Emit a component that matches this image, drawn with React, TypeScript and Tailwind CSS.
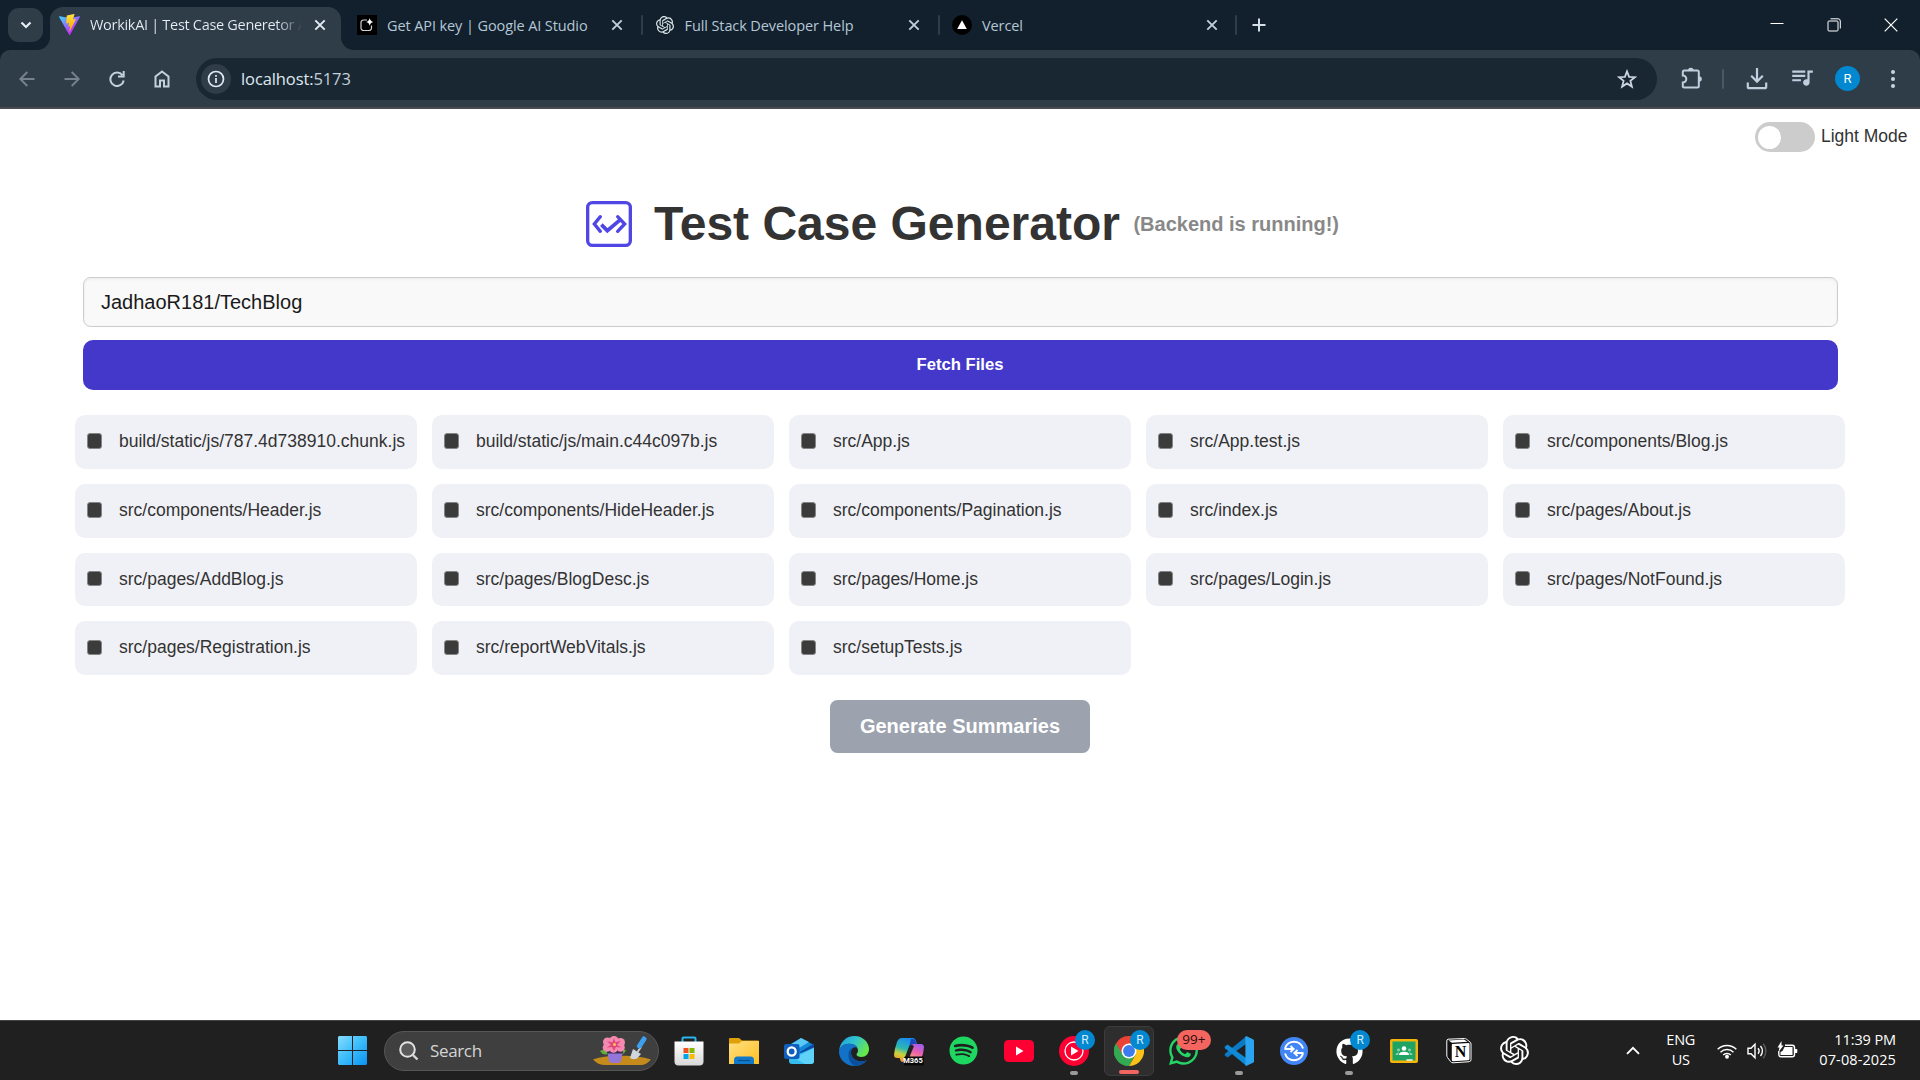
import React from "react";
import { FaSpotify, FaGithub, FaWhatsapp } from "react-icons/fa";
import { SiOpenai } from "react-icons/si";
import { MdQueueMusic } from "react-icons/md";

const files = [
  "build/static/js/787.4d738910.chunk.js",
  "build/static/js/main.c44c097b.js",
  "src/App.js",
  "src/App.test.js",
  "src/components/Blog.js",
  "src/components/Header.js",
  "src/components/HideHeader.js",
  "src/components/Pagination.js",
  "src/index.js",
  "src/pages/About.js",
  "src/pages/AddBlog.js",
  "src/pages/BlogDesc.js",
  "src/pages/Home.js",
  "src/pages/Login.js",
  "src/pages/NotFound.js",
  "src/pages/Registration.js",
  "src/reportWebVitals.js",
  "src/setupTests.js",
];

function Cross({ bright = false }: { bright?: boolean }) {
  return (
    <svg width="12" height="12" viewBox="0 0 12 12" className={bright ? "text-[#e6edf3]" : "text-[#c0cfdc]"}>
      <path d="M1.3 1.3l9.4 9.4M10.7 1.3l-9.4 9.4" stroke="currentColor" strokeWidth="1.9" fill="none" />
    </svg>
  );
}

function ViteIcon() {
  return (
    <svg width="21" height="21" viewBox="0 0 256 257">
      <defs>
        <linearGradient id="viteA" x1="0%" x2="60%" y1="8%" y2="78%">
          <stop offset="0%" stopColor="#41D1FF" />
          <stop offset="100%" stopColor="#BD34FE" />
        </linearGradient>
        <linearGradient id="viteB" x1="43%" x2="50%" y1="2%" y2="89%">
          <stop offset="0%" stopColor="#FFEA83" />
          <stop offset="8%" stopColor="#FFDD35" />
          <stop offset="100%" stopColor="#FFA800" />
        </linearGradient>
      </defs>
      <path fill="url(#viteA)" d="M255.153 37.938L134.897 252.976c-2.483 4.44-8.862 4.466-11.382.048L.875 37.958c-2.746-4.814 1.371-10.646 6.827-9.67l120.385 21.517a6.537 6.537 0 0 0 2.322-.004l117.867-21.483c5.438-.991 9.574 4.796 6.877 9.62Z" />
      <path fill="url(#viteB)" d="M185.432.063L96.44 17.501a3.268 3.268 0 0 0-2.634 3.014l-5.474 92.456a3.268 3.268 0 0 0 3.997 3.378l24.777-5.718c2.318-.535 4.413 1.507 3.936 3.838l-7.361 36.047c-.495 2.426 1.782 4.5 4.151 3.78l15.304-4.649c2.372-.72 4.652 1.36 4.15 3.788l-11.698 56.621c-.732 3.542 3.979 5.473 5.943 2.437l1.313-2.028l72.516-144.72c1.215-2.423-.88-5.186-3.54-4.672l-25.505 4.922c-2.396.462-4.435-1.77-3.759-4.114l16.646-57.705c.677-2.35-1.37-4.583-3.769-4.113Z" />
    </svg>
  );
}

function StudioIcon() {
  return (
    <svg width="20" height="20" viewBox="0 0 20 20">
      <rect width="20" height="20" fill="#000" />
      <path d="M10 5H6.5A2.5 2.5 0 0 0 4 7.500V13a2.500 2.500 0 0 0 2.500 2.500H12A2.500 2.500 0 0 0 14.500 13v-2.500" fill="none" stroke="#cfcfcf" strokeWidth="1.2" />
      <path d="M12.700 3q.5 3.300 3.600 3.900q-3.100.6-3.600 3.900q-.5-3.300-3.600-3.900q3.100-.6 3.600-3.900z" fill="#fff" />
    </svg>
  );
}

function VercelIcon() {
  return (
    <svg width="20" height="20" viewBox="0 0 20 20">
      <circle cx="10" cy="10" r="10" fill="#000" />
      <path d="M10 5.300l4.800 8.700H5.200z" fill="#fff" />
    </svg>
  );
}

function Tab({ icon, title, last = false }: { icon: React.ReactNode; title: string; last?: boolean }) {
  return (
    <div className="flex h-[34px] w-[297.5px] items-center">
      <div className="flex w-[22px] shrink-0 justify-center">{icon}</div>
      <span className="ml-[9px] flex-1 whitespace-nowrap pt-[1.5px] text-[14.5px] tracking-[-0.1px] text-[#b5c6d6]">{title}</span>
      <div className={last ? "mr-[17px]" : "mr-[18px]"}>
        <Cross />
      </div>
      <div className={last ? "mr-[12px] h-5 w-[2px] shrink-0 rounded bg-[#2f3d49]" : "mr-[11px] h-5 w-[2px] shrink-0 rounded bg-[#2f3d49]"} />
    </div>
  );
}

function TabStrip() {
  return (
    <div className="flex h-[50px] bg-[#11202c]">
      <div className="ml-2 mt-2 flex h-[34px] w-[35px] items-center justify-center rounded-[11px] bg-[#2f3d49]">
        <svg width="12" height="8" viewBox="0 0 12 8">
          <path d="M1.500 1.500L6 6l4.500-4.500" stroke="#e6edf3" strokeWidth="2.200" fill="none" />
        </svg>
      </div>
      <svg width="14" height="50" viewBox="0 0 14 50" className="ml-[-7px]">
        <path d="M14 37v13H1A13 13 0 0 0 14 37z" fill="#2f3d49" />
      </svg>
      <div className="mt-[7px] flex h-[43px] w-[291px] items-center rounded-t-[13px] bg-[#2f3d49] pb-2 pl-[9px]">
        <ViteIcon />
        <span className="ml-[10px] w-[212px] overflow-hidden whitespace-nowrap bg-gradient-to-r from-[#e8eef4] from-88% to-transparent bg-clip-text pt-[1.5px] text-[14.5px] tracking-[-0.3px] text-transparent">
          WorkikAI | Test Case Generetor App
        </span>
        <div className="ml-[12px]">
          <Cross bright />
        </div>
      </div>
      <svg width="14" height="50" viewBox="0 0 14 50">
        <path d="M0 37v13h13A13 13 0 0 1 0 37z" fill="#2f3d49" />
      </svg>
      <div className="ml-px mt-2 flex">
        <Tab icon={<StudioIcon />} title="Get API key | Google AI Studio" />
        <Tab icon={<SiOpenai size={18} color="#dfe6ec" />} title="Full Stack Developer Help" />
        <Tab icon={<VercelIcon />} title="Vercel" last />
        <svg width="14" height="34" viewBox="0 0 14 34" className="ml-[3px]">
          <path d="M7 10.500v13M.5 17h13" stroke="#d5dfe8" strokeWidth="2" />
        </svg>
      </div>
      <div className="ml-auto mr-[22px] mt-[18px] flex h-[14px] items-center gap-[43px]">
        <svg width="14" height="14" viewBox="0 0 14 14">
          <path d="M.5 5.500h13" stroke="#fff" strokeWidth="1" />
        </svg>
        <svg width="14" height="14" viewBox="0 0 14 14">
          <rect x="1" y="3" width="10" height="10" rx="1" fill="none" stroke="#fff" />
          <path d="M3.500.8H11A2.200 2.200 0 0 1 13.300 3v7.500" fill="none" stroke="#fff" />
        </svg>
        <svg width="14" height="14" viewBox="0 0 14 14">
          <path d="M.7.7l12.600 12.600M13.300.7L.7 13.300" stroke="#fff" strokeWidth="1.200" />
        </svg>
      </div>
    </div>
  );
}

function Toolbar() {
  return (
    <div className="bg-[#11202c]">
      <div className="flex h-[59px] items-center rounded-t-[10px] border-b-2 border-[#4a4a50] bg-[#2f3d49] pl-[19px] pt-px">
        <div className="flex w-[177px] gap-[29px]">
          <svg width="16" height="16" viewBox="0 0 16 16" fill="none" stroke="#76838e" strokeWidth="1.900">
            <path d="M15.500 8H1.800M8.300 1L1.300 8l7 7" />
          </svg>
          <svg width="16" height="16" viewBox="0 0 16 16" fill="none" stroke="#76838e" strokeWidth="1.900">
            <path d="M.5 8h13.700M7.700 1l7 7-7 7" />
          </svg>
          <svg width="16" height="16" viewBox="0 0 16 16" fill="none" stroke="#c3d1df" strokeWidth="2">
            <path d="M13.400 4.200A6.700 6.700 0 1 0 14.700 9.500M14.700 0v5.600H9" />
          </svg>
          <svg width="16" height="18" viewBox="0 0 16 18" fill="none" stroke="#c3d1df" strokeWidth="2" className="-mt-px">
            <path d="M1.500 6.500L8 1.500l6.500 5V16.500H10V10.500H6v6H1.500z" />
          </svg>
        </div>
        <div className="-mt-px flex h-[42px] w-[1461px] items-center rounded-full bg-[#192733] pl-[5px]">
          <div className="flex size-[30px] items-center justify-center rounded-full bg-[#2f3d49]">
            <svg width="18" height="18" viewBox="0 0 18 18" fill="none" stroke="#e2eaf1" strokeWidth="1.700">
              <circle cx="9" cy="9" r="7.500" />
              <path d="M9 8v5M9 5v1.800" />
            </svg>
          </div>
          <span className="ml-[10px] flex-1 pt-[2px] text-[16.5px] tracking-[-0.1px] text-[#dfe7ee]">
            localhost:<span className="text-[#c3cfd9]">5173</span>
          </span>
          <svg width="20" height="20" viewBox="0 0 20 20" className="mr-5" fill="none" stroke="#ccd5dd" strokeWidth="1.800">
            <path d="M10 2.400l2.100 5.400 5.800.4-4.500 3.700 1.500 5.700-4.900-3.200-4.900 3.200 1.500-5.700L2.100 8.200l5.800-.4z" />
          </svg>
        </div>
        <svg width="22" height="22" viewBox="0 0 22 22" className="-mt-[3px] ml-6" fill="none" stroke="#c0cfde" strokeWidth="2">
          <path d="M1.800 5A1.500 1.500 0 0 1 3.300 3.500H16.300A1.500 1.500 0 0 1 17.800 5V19A1.500 1.500 0 0 1 16.300 20.500H3.300A1.500 1.500 0 0 1 1.800 19V15.500A3.500 3.500 0 0 0 1.800 8.500z" />
          <path d="M7 3.500a2.800 2.800 0 0 1 5.600 0zM18 9.200a2.800 2.800 0 0 1 0 5.600z" fill="#c0cfde" stroke="none" />
        </svg>
        <div className="ml-[19px] h-5 w-[2px] rounded bg-[#485968]" />
        <svg width="22" height="22" viewBox="0 0 22 22" className="ml-[22px]" fill="none" stroke="#c0cfde" strokeWidth="2.200">
          <path d="M11 0v13M5.200 7.800l5.800 5.800 5.800-5.800M1.800 14.500v4.200a1.500 1.500 0 0 0 1.500 1.500h15.400a1.500 1.500 0 0 0 1.500-1.500v-4.200" />
        </svg>
        <MdQueueMusic size={26} color="#c0cfde" className="-mt-[4px] ml-[21px]" />
        <div className="-mt-px ml-[20px] flex size-[25px] items-center justify-center rounded-full bg-[#0288d1] font-['Roboto'] text-[13px] text-white">R</div>
        <svg width="4" height="20" viewBox="0 0 4 20" className="-mt-px ml-[31px]" fill="#c8d5e2">
          <circle cx="2" cy="3" r="2" />
          <circle cx="2" cy="10" r="2" />
          <circle cx="2" cy="17" r="2" />
        </svg>
      </div>
    </div>
  );
}

function Page() {
  return (
    <main className="h-[911px] bg-white font-['Liberation_Sans',sans-serif] text-[#333]">
      <div className="flex items-center justify-end gap-[5.5px] pr-[12.5px] pt-[13px]">
        <div className="flex h-[30px] w-[60px] items-center rounded-full bg-[#ccc] pl-[3px]">
          <div className="size-[23px] rounded-full bg-white" />
        </div>
        <span className="pb-[2px] text-[17.5px] leading-[26px]">Light Mode</span>
      </div>
      <div className="mt-[44px] flex h-[56px] items-center justify-center pl-[5px]">
        <svg width="46" height="46" viewBox="30 27 138 138" fill="none" stroke="#4f46e5" strokeWidth="10">
          <rect x="35" y="32" width="128" height="128" rx="14" />
          <path d="M73 74L55 96l18 22M125 74l21 22-21 22" strokeLinecap="round" />
          <path d="M76 98l18 18 40-34" strokeWidth="11" />
        </svg>
        <h1 className="ml-[22px] text-[48px] font-bold leading-none">Test Case Generator</h1>
        <span className="ml-[13.500px] text-[20px] font-bold text-[#888]">(Backend is running!)</span>
      </div>
      <div className="ml-[83px] mt-[25px] flex h-[50px] w-[1755px] items-center rounded-[7.5px] border border-[#ccc] bg-[#f9f9f9] pl-[17px] text-[20px] text-[#1a1a1a] shadow-[inset_0_1px_3px_rgba(0,0,0,0.06)]">
        JadhaoR181/TechBlog
      </div>
      <button className="ml-[83px] mt-[13px] flex h-[50px] w-[1755px] items-center justify-center rounded-[10px] bg-[#4338ca] pb-[2px] pr-px text-[16.667px] font-bold text-white">
        Fetch Files
      </button>
      <div className="ml-[75px] mt-[25px] grid w-[1770px] grid-cols-5 gap-[15px]">
        {files.map((file) => (
          <label key={file} className="flex h-[53.75px] items-center rounded-[10px] bg-[#f0f1f6] pb-[1.500px] pl-[11.5px]">
            <span className="size-[15.5px] rounded-[3px] border border-[#858585] bg-[#3b3b3b]" />
            <span className="ml-[17px] whitespace-nowrap text-[17.5px] leading-5">{file}</span>
          </label>
        ))}
      </div>
      <div className="mt-[25px] flex justify-center">
        <button className="h-[53px] w-[260px] rounded-[7.5px] bg-[#9ca3af] pb-[2px] text-[20px] font-bold text-white">Generate Summaries</button>
      </div>
    </main>
  );
}

function Badge() {
  return (
    <span className="absolute -top-[6px] left-[16px] flex size-5 items-center justify-center rounded-full bg-[#0288d1] font-['Roboto'] text-[12px] text-[#d6ecf9]">R</span>
  );
}

function TaskIcon({ children, badge = false, dot = false, active = false }: { children: React.ReactNode; badge?: boolean; dot?: boolean; active?: boolean }) {
  return (
    <div className="flex w-[55.050px] justify-center">
      <div className={active ? "relative flex size-[50px] items-center justify-center rounded-md border border-[#3c3c3c] bg-[#2e2e2e]" : "relative flex size-[50px] items-center justify-center"}>
        <div className="relative flex size-[30px] items-center justify-center">
          {children}
          {badge && <Badge />}
        </div>
        {active && <span className="absolute bottom-[1px] h-1 w-5 rounded-full bg-[#f26660]" />}
        {dot && <span className="absolute bottom-[1px] h-1 w-2 rounded-full bg-[#9a9a9a]" />}
      </div>
    </div>
  );
}

function Flowers() {
  return (
    <svg width="58" height="30" viewBox="0 0 58 30">
      <path d="M0 23.500q10-4 25-3.500q18-1 33 3.500q-5 5.500-10 5.500H12q-7 0-12-5.500z" fill="#c58a1c" />
      <path d="M7 15q6-4 9 2q-5 4-9-2zM33 14q-7-2-8 3q5 4 8-3z" fill="#5fae3a" />
      <path d="M14 15h16l-2 10q-1 2-3 2h-6q-2 0-3-2z" fill="#9476d8" />
      <path d="M14 14h16v3.500H14z" fill="#3d2c52" />
      <g fill="#f58ab0">
        <circle cx="21" cy="4.500" r="4.500" />
        <circle cx="27.500" cy="6.500" r="4.500" />
        <circle cx="27.500" cy="11.500" r="4.300" />
        <circle cx="20.500" cy="12.500" r="4.300" />
        <circle cx="14" cy="11.500" r="4.300" />
        <circle cx="14.500" cy="6" r="4.500" />
      </g>
      <path d="M21 2l1.500 4.500 5.500-2-4 4.500 4.500 2.500-5.500-.5-2 4-2-4-5.500.5 4.500-2.500-4-4 5.500 1.500z" fill="#e0457b" />
      <circle cx="21.500" cy="8.500" r="1.500" fill="#ffc65a" />
      <path d="M48 11l-3.500 5" stroke="#c9ced3" strokeWidth="2" />
      <path d="M40 13l8 5-4 4.500q-4 1.500-7-.5z" fill="#cfd6dc" />
      <path d="M51 3l-4.500 7" stroke="#3c9ff0" strokeWidth="5" strokeLinecap="round" />
    </svg>
  );
}

function Taskbar() {
  return (
    <footer className="flex h-[60px] items-center border-t border-[#444] bg-[#202020] text-white">
      <svg width="29" height="29" viewBox="0 0 29 29" className="ml-[338px]">
        <defs>
          <linearGradient id="win" x1="0" y1="0" x2="1" y2="1">
            <stop offset="0" stopColor="#86dcff" />
            <stop offset=".5" stopColor="#3bbcfb" />
            <stop offset="1" stopColor="#0a93f2" />
          </linearGradient>
        </defs>
        <path d="M1 0h13v14H0V1zM15 0h13l1 1v13H15zM0 15h14v14H1l-1-1zM15 15h14v13l-1 1H15z" fill="url(#win)" />
      </svg>
      <div className="ml-[17px] flex h-10 w-[275px] items-center rounded-full border border-[#565656] bg-[#3f3f3f] pl-[14px] pr-[7px]">
        <svg width="20" height="20" viewBox="0 0 20 20" fill="none">
          <circle cx="8.500" cy="8.500" r="7.300" stroke="#e2e2e2" strokeWidth="2" fill="#5a5a5a" />
          <path d="M13.800 13.800l4.700 4.700" stroke="#d5d5d5" strokeWidth="2.400" />
        </svg>
        <span className="ml-[11px] flex-1 text-[17px] tracking-[-0.35px] text-[#d4d4d4]">Search</span>
        <Flowers />
      </div>
      <div className="ml-[2px] flex">
        <TaskIcon>
          <svg width="30" height="30" viewBox="0 0 30 30">
            <defs>
              <linearGradient id="store" x1="0" y1="0" x2="0" y2="1">
                <stop offset="0" stopColor="#fff" />
                <stop offset="1" stopColor="#d8d8d8" />
              </linearGradient>
            </defs>
            <path d="M8.500 6V2.500a1 1 0 0 1 1-1h11a1 1 0 0 1 1 1V6" fill="none" stroke="#2bb5ee" strokeWidth="2" />
            <path d="M.5 5.500h29v20a4 4 0 0 1-4 4h-21a4 4 0 0 1-4-4z" fill="url(#store)" />
            <path d="M9.500 12h5v5h-5z" fill="#f25022" />
            <path d="M15.500 12h5v5h-5z" fill="#7fba00" />
            <path d="M9.500 18h5v5h-5z" fill="#00a4ef" />
            <path d="M15.500 18h5v5h-5z" fill="#ffb900" />
          </svg>
        </TaskIcon>
        <TaskIcon>
          <svg width="30" height="30" viewBox="0 0 30 30">
            <defs>
              <linearGradient id="folder" x1="0" y1="0" x2="1" y2="1">
                <stop offset="0" stopColor="#ffe083" />
                <stop offset="1" stopColor="#fdbf22" />
              </linearGradient>
            </defs>
            <path d="M0 3a1 1 0 0 1 1-1h9l3 2.500h16a1 1 0 0 1 1 1V12H0z" fill="#e0a108" />
            <path d="M0 7.500h10l3-2.500h17v23H0z" fill="url(#folder)" />
            <path d="M5 28v-4a3.500 3.500 0 0 1 3.500-3.500h13A3.500 3.500 0 0 1 25 24v4z" fill="#1279c9" />
            <path d="M9 24.500h12" stroke="#07508f" strokeWidth="1.200" />
          </svg>
        </TaskIcon>
        <TaskIcon>
          <svg width="30" height="30" viewBox="0 0 30 30">
            <path d="M5 9L17 2l12 6.500v8L5 26z" fill="#1489dc" />
            <path d="M6 9l11-7 8 4-15 9z" fill="#5ac8f5" />
            <path d="M16 16L30 7.500v4.500L18 20z" fill="#0b4a9e" />
            <path d="M5 20l10-2 15-6.500V25a3 3 0 0 1-3 3H8a3 3 0 0 1-3-3z" fill="#35bdf0" />
            <path d="M30 12v13a3 3 0 0 1-3 3h-6L10 22z" fill="#7ae0fb" opacity=".6" />
            <rect y="8" width="15.500" height="15" rx="2" fill="#0f5fbd" />
            <ellipse cx="7.700" cy="15.500" rx="4" ry="4.200" fill="none" stroke="#fff" strokeWidth="2.300" />
          </svg>
        </TaskIcon>
        <TaskIcon>
          <svg width="30" height="30" viewBox="0 0 30 30">
            <defs>
              <linearGradient id="edgeA" x1="0" y1="0" x2="1" y2=".5">
                <stop offset="0" stopColor="#1f97dc" />
                <stop offset=".5" stopColor="#30c3d2" />
                <stop offset="1" stopColor="#67e84a" />
              </linearGradient>
            </defs>
            <path d="M0 15C1 6 7 0 15.500 0 24 0 30 6.500 30 13c0 5-3.500 8-7.500 8-3 0-5-1-5-2.500 0-1 1.500-1.500 1.500-4C19 11 15.500 7.800 10.500 7.800 5 7.800 1 11 0 15z" fill="url(#edgeA)" />
            <path d="M0 15C1 10.500 5.500 7.800 10.500 7.800c4 0 6.800 1.600 7.900 4C14.500 10 12 13 12 16.500 12 22 17 25.500 22 25.500c2.500 0 4.500-.7 5.600-1.200C25 28 20.500 30 15.500 30 7 30-.5 23.500 0 15z" fill="#1172c8" />
            <path d="M9.500 19C9.500 14 12 12.500 14 12c-1.500 2-2 3-2 4.500C12 22 17 25.500 22 25.500c2.500 0 4.500-.7 5.600-1.200C25 28 20.500 30 17 30c-4.500-.8-7.500-5.500-7.500-11z" fill="#0c4f9c" />
          </svg>
        </TaskIcon>
        <TaskIcon>
          <svg width="30" height="30" viewBox="0 0 30 30">
            <defs>
              <linearGradient id="m365a" x1=".6" y1="0" x2=".3" y2="1">
                <stop offset="0" stopColor="#1b8af2" />
                <stop offset=".45" stopColor="#2bb8b0" />
                <stop offset=".7" stopColor="#c8d43c" />
                <stop offset="1" stopColor="#ff8a2a" />
              </linearGradient>
              <linearGradient id="m365b" x1=".7" y1="0" x2=".3" y2="1">
                <stop offset="0" stopColor="#a15cf0" />
                <stop offset=".5" stopColor="#e85fb0" />
                <stop offset="1" stopColor="#ff9b7a" />
              </linearGradient>
            </defs>
            <path d="M8 2h11q2 0 3 3l1 3h-4q-3 0-4 3l-3 9q-1.500 6-4 6-1.500 0-2-3l-.5-1H3q-3 0-3-3 .5-6 3-13 1.500-4 5-4z" fill="url(#m365a)" />
            <path d="M17 3h2q2 0 3 3l1 2h-4q-3 0-4 3z" fill="#1c45c0" />
            <path d="M20 8h7q3 0 3 3.500Q29.500 18 27 23H13l3-11q1-4 4-4z" fill="url(#m365b)" />
            <path d="M20 10l-4.500 11h-4.500l4-10q1-2 3-2z" fill="#202020" />
            <rect x="10" y="20.500" width="20" height="9" rx="1.500" fill="#0a0a0a" />
          </svg>
          <span className="absolute bottom-[1px] right-[1px] font-['Roboto'] text-[7.5px] font-bold leading-[8px] text-white">M365</span>
        </TaskIcon>
        <TaskIcon>
          <FaSpotify size={29} color="#1ed760" />
        </TaskIcon>
        <TaskIcon>
          <svg width="30" height="22" viewBox="0 0 30 22">
            <rect width="30" height="22" rx="4.500" fill="#ff0033" />
            <path d="M12 6.500l7.500 4.500-7.500 4.500z" fill="#fff" />
          </svg>
        </TaskIcon>
        <TaskIcon badge dot>
          <svg width="30" height="30" viewBox="0 0 30 30">
            <circle cx="15" cy="15" r="15" fill="#ff0033" />
            <circle cx="15" cy="15" r="9" fill="none" stroke="#fff" strokeWidth="1.300" />
            <path d="M12 10.500l7.500 4.500-7.500 4.500z" fill="#fff" />
          </svg>
        </TaskIcon>
        <TaskIcon badge active>
          <svg width="30" height="30" viewBox="0 0 48 48">
            <path d="M24 24L3.200 12A24 24 0 0 1 44.800 12z" fill="#ea4335" />
            <path d="M24 24H12L3.200 12A24 24 0 0 0 24 48l10-18z" fill="#34a853" />
            <path d="M24 12h20.800A24 24 0 0 1 24 48l10.400-18z" fill="#fbc116" />
            <path d="M3.200 12L13.600 30 24 12z" fill="#ea4335" />
            <path d="M3.200 12L13.600 30 24 48A24 24 0 0 1 3.200 12z" fill="#34a853" />
            <circle cx="24" cy="24" r="12" fill="#fff" />
            <circle cx="24" cy="24" r="9.500" fill="#3b7ded" />
          </svg>
        </TaskIcon>
        <TaskIcon>
          <FaWhatsapp size={33} color="#25d366" className="shrink-0" />
          <span className="absolute -top-[6px] left-[8px] flex h-5 w-[34px] items-center justify-center rounded-full bg-[#f5655f] text-[13.5px] text-[#2a0d0c]">99+</span>
        </TaskIcon>
        <TaskIcon dot>
          <svg width="30" height="30" viewBox="0 0 30 30">
            <path d="M22 8L3.500 21.500 1 19.500q-.8-1 0-1.800L22 .5z" fill="#0b79c4" />
            <path d="M22 22L3.500 8.500 1 10.500q-.8 1 0 1.800L22 29.500z" fill="#0f8ad6" />
            <path d="M22 0l7 3.200q1 .5 1 1.500v20.600q0 1-1 1.500L22 30q-.6-.4-.6-1.200V1.200Q21.400.4 22 0z" fill="#2aa4f0" />
          </svg>
        </TaskIcon>
        <TaskIcon>
          <svg width="28" height="28" viewBox="0 0 28 28" className="-ml-px">
            <circle cx="14" cy="14" r="14" fill="#4285f4" />
            <path d="M5 11.500A9.400 9.400 0 0 1 23 11.500M23 16.500A9.400 9.400 0 0 1 5 16.500" fill="none" stroke="#fff" strokeWidth="2" />
            <path d="M4.500 12h8.500M10.500 9l3.200 3-3.200 3M23.500 16h-8.500M17.500 13l-3.200 3 3.200 3" fill="none" stroke="#fff" strokeWidth="1.800" />
          </svg>
        </TaskIcon>
        <TaskIcon badge dot>
          <FaGithub size={27} color="#fff" className="mt-[2px]" />
        </TaskIcon>
        <TaskIcon>
          <svg width="28" height="24" viewBox="0 0 28 24">
            <rect width="28" height="24" rx="2" fill="#f4b40a" />
            <rect x="2.500" y="2.500" width="23" height="19" fill="#1fa463" />
            <circle cx="14" cy="9.500" r="2.300" fill="#fff" />
            <path d="M9 16q0-3.200 5-3.200t5 3.200z" fill="#fff" />
            <g fill="#8fd3b1">
              <circle cx="8.500" cy="11" r="1.400" />
              <circle cx="19.500" cy="11" r="1.400" />
              <path d="M5.500 16q.2-2.500 3.500-2.500l-1 2.500zM22.500 16q-.2-2.500-3.500-2.500l1 2.500z" />
            </g>
            <path d="M16.500 20.300h6v1.400h-6z" fill="#fff" />
          </svg>
        </TaskIcon>
        <TaskIcon>
          <svg width="26" height="26" viewBox="0 0 26 26">
            <path d="M2 1.200L18.500.5q1 0 2 .7L24 4q1 .7 1 2v15.500q0 2-1.800 2.200L7 24.800q-1.500 0-2.400-1.200L1.500 19.500Q.8 18.500.8 17V3q0-1.600 1.200-1.800z" fill="#111" stroke="#fff" strokeWidth="1" />
            <path d="M6.500 6l16-.9q1 0 1 1v15q0 1.100-1 1.200L7 23.200q-1.200 0-1.200-1.200V7q0-.9.700-1z" fill="#fff" />
            <path d="M2.500 2.500L18 1.600l3.500 2.200L6 4.700z" fill="#fff" />
          </svg>
          <span className="absolute left-[10.500px] top-[6px] font-['Liberation_Serif',serif] text-[16px] font-bold leading-[20px] text-black">N</span>
        </TaskIcon>
        <TaskIcon>
          <SiOpenai size={29} color="#fff" />
        </TaskIcon>
      </div>
      <svg width="14" height="9" viewBox="0 0 14 9" className="ml-[84px]">
        <path d="M1 7.800L7 1.800l6 6" fill="none" stroke="#fff" strokeWidth="1.900" />
      </svg>
      <div className="ml-[12.500px] w-[57px] pb-px text-center text-[14.5px] leading-5 tracking-[-0.2px]">
        <div>ENG</div>
        <div>US</div>
      </div>
      <svg width="20" height="16" viewBox="0 0 20 16" className="ml-[8px]" fill="none" stroke="#fff" strokeWidth="1.500">
        <path d="M.7 6.300a13.200 13.200 0 0 1 18.600 0M3.500 9.200a9.200 9.200 0 0 1 13 0M6.200 12a5.300 5.300 0 0 1 7.600 0" />
        <circle cx="10" cy="13.800" r="1.200" fill="#fff" />
      </svg>
      <svg width="21" height="18" viewBox="0 0 21 18" className="ml-[10px]" fill="none" stroke="#fff" strokeWidth="1.400">
        <path d="M1 6.200h3l4-4v13.600l-4-4H1z" />
        <path d="M11 6.300a4.200 4.200 0 0 1 0 5.400M13.500 4a7.500 7.500 0 0 1 0 10" />
        <path d="M16.200 1.800a11 11 0 0 1 0 14.400" stroke="#5c5c5c" />
      </svg>
      <svg width="21" height="18" viewBox="0 0 21 18" className="-mt-[2px] ml-[9px]">
        <path d="M8 4.200h7.300A2.200 2.200 0 0 1 17.500 6.400v7.200a2.200 2.200 0 0 1-2.200 2.200H4a2.200 2.200 0 0 1-2.200-2.200V10" fill="none" stroke="#fff" strokeWidth="1.400" />
        <path d="M7.500 6h8v8h-12v-3l2-1z" fill="#fff" />
        <path d="M18 8h1.500q.8 0 .8.800v2.400q0 .8-.8.800H18z" fill="#fff" />
        <path d="M4.500 0L.5 6.500h2L1.500 11 6.500 4.500h-2z" fill="#fff" />
      </svg>
      <div className="ml-auto mr-6 pb-[2px] text-right text-[14.5px] leading-5 tracking-[0.1px]">
        <div className="tracking-[-0.1px]">11:39 PM</div>
        <div>07-08-2025</div>
      </div>
    </footer>
  );
}

export default function App() {
  return (
    <div className="h-[1080px] w-[1920px] overflow-hidden bg-white font-['Open_Sans',sans-serif]">
      <TabStrip />
      <Toolbar />
      <Page />
      <Taskbar />
    </div>
  );
}
